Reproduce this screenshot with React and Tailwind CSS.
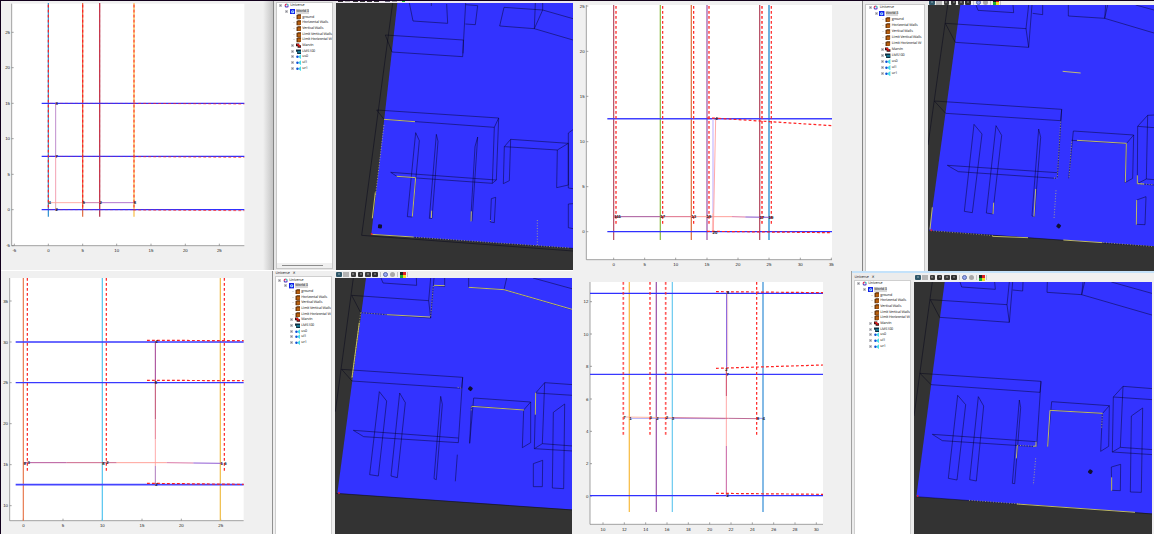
import React from "react";

const RED = "#ff2222";
const DARK = "#333333";

/* ---------- plots ---------- */

function Plot({ view, className, frame, xt, yt, solid = [], dashed = [], thin = [], marks = [] }) {
  const [l, t, r, b] = frame;
  return (
    <svg viewBox={view} className={className} preserveAspectRatio="none" textRendering="geometricPrecision">
      <rect x={l} y={t} width={r - l} height={b - t} fill="#fff" />
      <path d={`M${l} ${t}V${b}H${r}`} fill="none" stroke="#777" strokeWidth="2" />
      {xt.map(([x, s]) => (
        <g key={"x" + s}>
          <path d={`M${x} ${b}v-6`} stroke="#777" strokeWidth="2" />
          <text x={x} y={b + 19} fontSize="13" textAnchor="middle" fill="#222" fontFamily="Liberation Sans, sans-serif">{s}</text>
        </g>
      ))}
      {yt.map(([y, s]) => (
        <g key={"y" + s}>
          <path d={`M${l} ${y}h6`} stroke="#777" strokeWidth="2" />
          <text x={l - 5} y={y + 5} fontSize="13" textAnchor="end" fill="#222" fontFamily="Liberation Sans, sans-serif">{s}</text>
        </g>
      ))}
      {solid.map(([x1, y1, x2, y2, c, w = 3.6], i) => (
        <line key={"s" + i} x1={x1} y1={y1} x2={x2} y2={y2} stroke={c} strokeWidth={w} />
      ))}
      {thin.map(([x1, y1, x2, y2, c, w = 2.4], i) => (
        <line key={"t" + i} x1={x1} y1={y1} x2={x2} y2={y2} stroke={c} strokeWidth={w} />
      ))}
      {dashed.map(([x1, y1, x2, y2, w = 3.6, o = 1], i) => (
        <line key={"d" + i} x1={x1} y1={y1} x2={x2} y2={y2} stroke={RED} strokeWidth={w} strokeOpacity={o} strokeDasharray="8.5 6.5" />
      ))}
      {marks.map(([x, y, s], i) => (
        <text key={"m" + i} x={x} y={y + 4.7} fontSize="13" fontWeight="700" textAnchor="middle" fill="#1a1a1a" fontFamily="Liberation Sans, sans-serif">{s}</text>
      ))}
    </svg>
  );
}

const BLUE = "#3030ff";

function PlotOne() {
  return (
    <Plot
      view="3 3 816 807"
      className="block h-[269px] w-[272px]"
      frame={[35, 11, 733, 737]}
      xt={[[43, "-5"], [145, "0"], [248, "5"], [350, "10"], [453, "15"], [556, "20"], [658, "25"]]}
      yt={[[97, "25"], [203, "20"], [310, "15"], [416, "10"], [523, "5"], [629, "0"], [737, "-5"]]}
      solid={[
        [145, 9, 145, 650, "#2a8fd0"], [248, 9, 248, 650, "#e0683a", 3.5], [299, 9, 299, 650, "#b8405a", 4], [402, 9, 402, 650, "#fbd07a", 5],
        [125, 310, 733, 310, BLUE, 4], [125, 469, 733, 469, BLUE, 4], [125, 629, 733, 629, BLUE, 4],
      ]}
      dashed={[
        [145, 14, 145, 630], [248, 14, 248, 630], [299, 14, 299, 630, 2, 0.6], [402, 14, 402, 630, 3],
        [150, 309.5, 400, 310, 1.4, 0.6], [400, 310, 733, 312, 2.6, 0.85], [150, 469, 400, 470, 1.4, 0.6], [400, 470, 733, 472, 2.6, 0.85],
        [150, 629, 400, 630, 1.4, 0.6], [400, 630, 733, 632, 2.6, 0.85],
      ]}
      thin={[
        [167, 310, 167, 469, "#b070c0"], [167, 469, 167, 608, "#f08aa0"], [167, 608, 167, 629, "#d090a0"],
        [149, 608, 248, 608, "#ff9a90"], [248, 608, 302, 608, "#c05898"], [302, 608, 405, 608, "#a050c0"],
      ]}
      marks={[[170, 310, "3"], [170, 470, "7"], [170, 629, "2"], [149, 608, "4"], [251, 608, "5"], [302, 608, "2"], [405, 608, "8"]]}
    />
  );
}

function PlotTwo() {
  return (
    <Plot
      view="3 3 867 810"
      className="block h-[270px] w-[289px]"
      frame={[43, 15, 780, 779]}
      xt={[[125, "0"], [218, "5"], [311, "10"], [405, "15"], [498, "20"], [591, "25"], [685, "30"], [778, "35"]]}
      yt={[[18, "25"], [154, "20"], [289, "15"], [425, "10"], [560, "5"], [695, "0"]]}
      solid={[
        [125, 15, 125, 720, "#b44a60", 3.5], [265, 15, 265, 720, "#94c050", 4], [358, 15, 358, 720, "#e07a4c", 4],
        [405, 15, 405, 720, "#a564b0", 4], [563, 15, 563, 720, "#b8556a", 4], [591, 15, 591, 720, "#60acdc", 5.5],
        [106, 356, 780, 356, "#4040ff", 4.5], [106, 695, 780, 695, BLUE, 4],
      ]}
      dashed={[
        [132, 18, 132, 677, 5, 0.75], [272, 18, 272, 677], [365, 18, 365, 677], [411, 18, 411, 677, 5, 0.75],
        [570, 18, 570, 677, 6, 0.7], [598, 18, 598, 677, 4, 0.9],
        [405, 354, 440, 355], [440, 355, 780, 377], [405, 694, 780, 698],
      ]}
      thin={[
        [423, 358, 423, 640, "#d6ccff", 5], [423, 640, 422, 694, "#ffc0c0", 5], [431, 358, 424, 694, "#ffaaa8", 3],
        [127, 650, 265, 650, "#a04890", 2.8], [265, 650, 358, 650, "#dc607c", 2.8], [358, 650, 480, 650, "#ff9890", 2.8],
        [480, 650, 520, 651, "#dc709c", 2.8], [520, 651, 600, 652, "#8450c8", 3],
      ]}
      marks={[[130, 650, "1"], [140, 650, "11"], [272, 650, "17"], [365, 650, "13"], [411, 650, "15"], [569, 651, "17"], [597, 653, "19"], [433, 356, "4"], [429, 696, "20"]]}
    />
  );
}

function PlotThree() {
  return (
    <Plot
      view="3 15 813 789"
      className="block h-[263px] w-[271px]"
      frame={[29, 36, 731, 764]}
      xt={[[70, "0"], [189, "5"], [307, "10"], [426, "15"], [544, "20"], [662, "25"]]}
      yt={[[105, "35"], [228, "30"], [350, "25"], [473, "20"], [596, "15"], [719, "10"]]}
      solid={[
        [70, 36, 70, 764, "#e87a50"], [307, 36, 307, 764, "#5cc8f0", 3.8], [661, 36, 661, 764, "#f0c050", 3.8],
        [47, 228, 731, 228, "#3838ff", 4], [47, 350, 731, 350, "#3838ff", 4], [47, 656, 731, 656, "#4444ff", 4.8],
      ]}
      dashed={[
        [82, 36, 82, 615], [319, 36, 319, 615], [673, 36, 673, 615],
        [441, 223, 731, 224], [441, 343, 731, 344], [441, 652, 731, 655],
      ]}
      thin={[
        [466, 228, 466, 350, "#a03a90", 3], [466, 350, 466, 460, "#c0486c", 3], [466, 460, 466, 520, "#e87c90", 3],
        [466, 520, 466, 600, "#ff9a9a", 2.5], [466, 600, 466, 656, "#a060b0", 2.5],
        [73, 590, 200, 590, "#b04890", 2.8], [200, 590, 350, 590, "#c85880", 2.8], [350, 590, 500, 590, "#ff9a90", 2.8],
        [500, 590, 580, 591, "#d870a0", 2.8], [580, 591, 668, 592, "#8850d0", 2.8],
      ]}
      marks={[[74, 591, "9"], [86, 590, "3"], [310, 591, "8"], [322, 590, "2"], [665, 591, "1"], [676, 593, "6"], [469, 226, "4"], [468, 350, "8"], [469, 655, "2"]]}
    />
  );
}

function PlotFour() {
  return (
    <Plot
      view="3 15 834 789"
      className="block h-[263px] w-[278px]"
      frame={[54, 48, 753, 775]}
      xt={[[93, "10"], [157, "12"], [221, "14"], [285, "16"], [349, "18"], [413, "20"], [477, "22"], [541, "24"], [605, "26"], [669, "28"], [733, "30"]]}
      yt={[[107, "12"], [204, "10"], [301, "8"], [399, "6"], [496, "4"], [593, "2"], [690, "0"]]}
      solid={[
        [172, 48, 172, 738, "#f8c050", 4], [253, 48, 253, 738, "#a060b0", 4], [301, 48, 301, 738, "#70ccf0", 3.8], [573, 48, 573, 738, "#78b4e4", 5.5],
        [54, 82, 753, 82, BLUE, 4], [54, 325, 753, 325, "#3838ff", 4], [54, 689, 753, 689, BLUE, 4],
      ]}
      dashed={[
        [154, 48, 154, 507, 5, 0.75], [234, 48, 234, 507, 5, 0.75], [281, 48, 281, 507, 5, 0.75], [554, 48, 554, 507],
        [432, 77, 753, 80], [432, 307, 753, 297], [432, 682, 753, 685],
      ]}
      thin={[
        [464, 82, 464, 307, "#7850d8", 3], [467, 82, 467, 300, "#f8b0b0", 1.5], [463, 307, 463, 390, "#d04060", 3],
        [463, 390, 463, 540, "#ff9898", 2.5], [463, 540, 463, 689, "#c860a0", 3],
        [175, 457, 460, 458, "#8a80f0", 2], [157, 453, 300, 455, "#ffaa90", 2.5], [300, 455, 470, 457, "#c85078", 2.5],
        [470, 457, 556, 458, "#b04c80", 2.5], [556, 457, 576, 457, "#6060f0", 2],
      ]}
      marks={[[157, 455, "7"], [175, 457, "1"], [236, 455, "3"], [256, 457, "2"], [285, 454, "2"], [303, 457, "3"], [558, 457, "8"], [575, 457, "4"], [468, 80, "8"], [463, 309, "2"], [467, 325, "7"], [467, 688, "2"]]}
    />
  );
}

/* ---------- simulator scenes ---------- */

function Scene({ view, className, ground, lines, scans, dots = [], robot, origin }) {
  return (
    <svg viewBox={view} className={className} preserveAspectRatio="none">
      <rect x="0" y="0" width="1000" height="900" fill={DARK} />
      <polygon points={ground} fill="#3333ff" />
      <path d={lines} fill="none" stroke="#000018" strokeWidth="2" strokeOpacity=".68" />
      <path d={scans} fill="none" stroke="#cfc964" strokeWidth="2.7" />
      {dots.map((d, i) => (
        <path key={i} d={d} fill="none" stroke="#c4bf70" strokeWidth="2.2" strokeDasharray="3 5" />
      ))}
      {origin && <circle cx={origin[0]} cy={origin[1]} r="3" fill="#e02030" />}
      <rect x={robot[0] - 6} y={robot[1] - 6} width="12" height="12" rx="3" fill="#101030" transform={`rotate(${robot[2]} ${robot[0]} ${robot[1]})`} />
    </svg>
  );
}

function SceneOne() {
  return (
    <Scene
      view="198 9 711 801"
      className="block h-[267px] w-[237px]"
      ground="382,9 909,9 909,745 304,703"
      lines="M368 9L275 706L909 753M304 703L909 745M346 105L580 120M346 105L366 156L578 170L587 9M579 160L580 120M418 9L429 63L533 70L530 12M484 9V18M587 14L623 17L616 74L586 72M689 78L702 22L818 30L793 86L689 78M796 9L793 86M818 9V30L909 56M793 86L909 120M320 330L686 354L673 382L342 358L320 330M686 354L679 540L667 550L673 382M362 517L679 540M362 517L382 530L667 550M437 398L448 422L427 651L412 650L437 398M499 403L504 424L486 655L478 655L499 403M623 411L615 440L602 663M623 411L606 664M703 440L722 418L895 430L862 450L703 440L700 551L718 542L722 418M895 430V555L860 563L862 450M909 389L895 399V564L909 566M909 611L895 612V683L909 686M664 596L677 592L673 668L661 666Z"
      scans="M342 358L435 365M380 529L437 533L427 650M316 577L307 655M304 703L430 711M485 632L484 654M604 634L603 664"
      dots={["M342 375L316 590", "M430 711L900 744", "M802 660V738", "M661 660V668"]}
      robot={[330, 679, 5]}
      origin={[305, 702]}
    />
  );
}

function SceneTwo() {
  return (
    <Scene
      view="222 15 678 798"
      className="block h-[266px] w-[226px]"
      ground="319,15 900,15 900,739 226,692"
      lines="M281 15L222 435M226 692L900 740M274 70L517 86M274 70L304 127L524 142L534 15M524 15L516 86L524 142M366 15L372 31L479 38L477 15M536 40L566 44V15M643 15V48L752 55L761 15M755 15L752 55L900 99M845 15L900 30M241 303L623 328L620 362L275 340L241 303M623 328L610 533M280 496L610 518M280 496L313 515L606 535M360 373L384 402L355 638L331 634L360 373M426 377L443 406L416 642L397 639L426 377M554 387L560 412L541 650L534 648L554 387M644 535L658 393L839 405L817 431L653 421M839 405L836 535L813 548L817 431M900 345L881 346L851 379L850 551L900 555M881 346L877 537L850 551M851 379L900 383M877 537L900 539M848 600L876 590L873 674L847 673Z"
      scans="M669 421L817 430L814 547M626 214L680 219M419 608L417 642M545 567L540 650M848 600L847 674M850 526V551L870 552M628 720L745 728M415 709L522 713M235 622L228 688"
      dots={["M230 692L420 707", "M740 727L900 740", "M606 571L600 657", "M653 425L645 535", "M620 365L610 533", "M852 551L900 554", "M600 534L610 534"]}
      robot={[614, 678, 35]}
      origin={[232, 691]}
    />
  );
}

function SceneThree() {
  return (
    <Scene
      view="195 36 711 768"
      className="block h-[256px] w-[237px]"
      ground="288,36 909,36 909,731 202,682"
      lines="M250 36L196 437M198 682L909 732M245 88L476 104M245 88L272 140L482 156L492 36M482 36L476 104L482 156M333 36L339 51L440 58L439 36M524 36V62L492 58M596 36V64L702 71L909 132M710 36L702 71M789 36L909 69M215 310L578 334L575 367L246 345L215 310M578 334L565 530M250 493L565 516M250 493L281 512L565 530M328 377L350 405L325 630L299 626L328 377M389 381L406 410L382 635L363 630L389 381M512 391L517 415L499 641L492 638L512 391M562 566L556 646M599 532L611 396L782 408L761 432L604 420M604 420L599 532M782 408L782 530L757 545L761 432M909 356L824 350L797 381L793 548L909 555M824 350L817 533L793 548M797 381L909 388M817 533L909 540M790 593L818 583L817 662L790 662ZM850 439L884 414L881 668L847 666Z"
      scans="M605 421L762 432M797 380L796 446M596 64L702 71L906 130M492 58L524 59M268 170L246 335M350 146L480 153"
      dots={["M272 140L350 146", "M490 60L482 152", "M604 422V436", "M563 364L575 367", "M272 140L246 340"]}
      robot={[601, 368, 40]}
      origin={[207, 681]}
    />
  );
}

function SceneFour() {
  return (
    <Scene
      view="192 48 714 756"
      className="block h-[252px] w-[238px]"
      ground="284,48 909,48 909,743 199,692"
      lines="M247 48L192 450M199 692L909 744M241 101L471 116M241 101L269 154L478 169L488 48M478 48L471 116L478 169M330 48L335 63L436 70L434 48M519 48L518 75L488 72M592 48L591 79L695 86L704 48M699 48L695 86L909 148M784 48L909 83M210 322L573 346L570 379L243 356L210 322M573 346L560 542M247 505L560 527M247 505L277 524L556 542M323 388L347 416L321 642L295 637L323 388M385 392L401 420L379 645L359 641L385 392M508 402L512 425L494 653L487 652L508 402M593 542L605 407L778 419L757 443L600 432M778 419L776 541L752 556L757 443M909 368L819 361L790 393L787 558L909 566M819 361L811 544L787 558M790 393L909 401M811 544L909 551M784 603L812 595L811 674L785 673ZM844 450L878 426L874 679L841 678Z"
      scans="M600 433L757 442M600 433L593 542M502 538L499 577M500 714L855 739M785 634V674M558 527V540L550 541"
      dots={["M757 442L755 485", "M502 538L560 541", "M357 703L510 714", "M557 577L550 657"]}
      robot={[721, 617, 35]}
      origin={[203, 690]}
    />
  );
}

/* ---------- tree ---------- */

function NodeIcon({ kind }) {
  const c = "block h-[5.4px] w-[5.4px] shrink-0";
  if (kind === "universe")
    return (
      <svg viewBox="0 0 10 10" className={c}>
        <path d="M5 5V1A4 4 0 0 1 9 5Z" fill="#40c0c0" />
        <path d="M5 5H9A4 4 0 0 1 5 9Z" fill="#8048d0" />
        <path d="M5 5V9A4 4 0 0 1 1 5Z" fill="#5050c0" />
        <path d="M5 5H1A4 4 0 0 1 5 1Z" fill="#e03060" />
        <circle cx="5" cy="5" r="1.2" fill="#fff" />
      </svg>
    );
  if (kind === "world")
    return (
      <svg viewBox="0 0 10 10" className={c}>
        <rect width="10" height="10" fill="#1020e8" />
        <circle cx="5" cy="5" r="2.9" fill="#b8e8ff" />
        <circle cx="5" cy="5" r="1.3" fill="#3070f0" />
      </svg>
    );
  if (kind === "wall")
    return (
      <svg viewBox="0 0 10 10" className={c}>
        <path d="M1 2L4 .5H9.5V8L7 9.8H1Z" fill="#5a2c08" />
        <path d="M3 3H9V8L7 9H3Z" fill="#b8600f" />
      </svg>
    );
  if (kind === "robot")
    return (
      <svg viewBox="0 0 10 10" className={c}>
        <path d="M0 1H6V4H10V9H3V6H0Z" fill="#301010" />
        <path d="M1 2H5L9 7H5Z" fill="#e01818" />
      </svg>
    );
  if (kind === "laser")
    return (
      <svg viewBox="0 0 10 10" className={c}>
        <path d="M0 1H10V9.5H2V5H0Z" fill="#103040" />
        <path d="M3 4H9V7H3Z" fill="#1888a8" />
      </svg>
    );
  return (
    <svg viewBox="0 0 10 10" className={c}>
      <path d="M3.5 5L10 0V10Z" fill="#48dce8" />
      <circle cx="2.6" cy="5" r="2.2" fill="#1050d8" />
    </svg>
  );
}

const NODES = [
  [0, "universe", "Universe", true],
  [1, "world", "World 3", true],
  [2, "wall", "ground", false],
  [2, "wall", "Horizontal Walls", false],
  [2, "wall", "Vertical Walls", false],
  [2, "wall", "Limit Vertical Walls", false],
  [2, "wall", "Limit Horizontal W", false],
  [2, "robot", "Marvin", true],
  [2, "laser", "LMS100", true],
  [2, "sonar", "us0", true],
  [2, "sonar", "ul1", true],
  [2, "sonar", "ur1", true],
];

const INDENT = ["pl-[2px]", "pl-[8px]", "pl-[14px]"];

function Tree({ row }) {
  return (
    <div>
      {NODES.map(([level, kind, label, open]) => (
        <div key={label} className={`flex items-center whitespace-nowrap ${row} ${INDENT[level]}`}>
          <span className="flex w-[4px] shrink-0 items-center justify-center">
            {open ? (
              <span className="flex h-[3px] w-[3px] items-center justify-center bg-[#c4c4c8]">
                <span className="h-px w-px bg-[#85858d]" />
              </span>
            ) : (
              <span className="ml-[2px] h-px w-[3px] bg-[#e0e0e0]" />
            )}
          </span>
          <span className="ml-[1.4px] mr-px">
            <NodeIcon kind={kind} />
          </span>
          <span className={`font-['Open_Sans',sans-serif] text-[3.7px] leading-[5px] tracking-[-0.13px] text-[#111] [text-rendering:geometricPrecision] ${level === 1 ? "bg-[#d9d9d9]" : ""}`}>{label}</span>
        </div>
      ))}
    </div>
  );
}

function Tab() {
  return (
    <div className="flex items-center gap-[3px] pl-px font-['Open_Sans',sans-serif] text-[3.7px] leading-[5px] tracking-[-0.13px] text-[#111] [text-rendering:geometricPrecision]">
      <span>Universe</span>
      <span>✕</span>
    </div>
  );
}

function Tool({ color }) {
  return (
    <span className={`flex h-[5.4px] w-[5.6px] shrink-0 items-center justify-center rounded-[1px] ${color}`}>
      <span className="h-[2px] w-[2px] bg-white/25" />
    </span>
  );
}

function Toolbar({ className }) {
  return (
    <div className={`flex items-center gap-[1.7px] overflow-hidden bg-[#f0f0f0] pl-px ${className}`}>
      <Tool color="bg-[#30586a]" />
      <span className="h-[5px] w-[5.6px] shrink-0 bg-[#b4b4b4]" />
      <Tool color="bg-[#3c3c3c]" />
      <Tool color="bg-[#303030]" />
      <Tool color="bg-[#3c3c3c]" />
      <Tool color="bg-[#303030]" />
      <span className="ml-[0.7px] h-[5px] w-px shrink-0 bg-[#c4c4c4]" />
      <span className="h-[5px] w-[5px] shrink-0 rounded-full border border-[#5868a8] bg-[#98a8f0]" />
      <span className="ml-[0.6px] h-[5px] w-[5px] shrink-0 rounded-full bg-[#a8a8a8]" />
      <span className="h-[5px] w-px shrink-0 bg-[#c4c4c4]" />
      <svg viewBox="0 0 6 6" className="block h-[6px] w-[6px] shrink-0">
        <path d="M0 0H3V3H0Z" fill="#202020" />
        <path d="M3 0H6V3H3Z" fill="#e02020" />
        <path d="M0 3H3V6H0Z" fill="#20b030" />
        <path d="M3 3H6V6H3Z" fill="#f8e020" />
      </svg>
      <span className="h-[5px] w-px shrink-0 bg-[#c4c4c4]" />
    </div>
  );
}

function PlotPane({ children }) {
  return <div className="relative shrink-0 overflow-hidden bg-[#f0f0f0]">{children}</div>;
}

export default function App() {
  return (
    <div className="flex h-[534px] w-[1154px] overflow-hidden border-t border-[#12001c] bg-[#f0f0f0]">
      <div className="flex w-[573px] shrink-0 flex-col border-l border-[#12001c]">
        <section className="flex h-[269px]">
          <PlotPane>
            <PlotOne />
            <div className="absolute inset-y-0 right-0 w-[10px] bg-gradient-to-r from-transparent to-[#c4c4c4]" />
          </PlotPane>
          <div className="flex w-[63px] shrink-0 border-l border-[#858585] bg-[#e6e6e6] pb-[1px] pl-[1.5px] pr-[3px] pt-px">
            <div className="flex min-w-0 flex-1 flex-col justify-between border border-[#c8c8c8] bg-white">
              <Tree row="h-[5.68px]" />
              <div className="flex h-[5px] items-center bg-[#f0f0f0] pl-[5px]">
                <div className="h-px w-[41px] bg-[#8c8c8c]" />
              </div>
            </div>
          </div>
          <div className="flex w-[237px] shrink-0 flex-col">
            <div className="flex h-[2px] items-start gap-[2.3px] bg-[#eee8f0] pl-[2px]">
              <span className="h-px w-[5px] bg-[#333]" />
              <span className="h-px w-[5px] bg-[#aaa]" />
              <span className="h-px w-[5px] bg-[#333]" />
              <span className="h-px w-[5px] bg-[#333]" />
              <span className="h-px w-[5px] bg-[#333]" />
              <span className="h-px w-[5px] bg-[#333]" />
              <span className="ml-[3px] h-px w-[5px] bg-[#667]" />
              <span className="h-px w-[5px] bg-[#999]" />
              <span className="ml-[3px] h-px w-[3px] bg-[#20c030]" />
            </div>
            <SceneOne />
          </div>
        </section>
        <section className="flex h-[264px] border-t border-white">
          <PlotPane>
            <PlotThree />
          </PlotPane>
          <div className="flex w-[63px] shrink-0 flex-col border-l border-[#909090] bg-[#efefef] pl-[1.5px] pr-[3px]">
            <Tab />
            <div className="min-h-0 flex-1 overflow-hidden border border-b-0 border-[#cfcfcf] bg-white pt-[0.4px]">
              <Tree row="h-[5.68px]" />
            </div>
          </div>
          <div className="w-[237px] shrink-0">
            <Toolbar className="h-[7px]" />
            <SceneThree />
          </div>
        </section>
      </div>
      <div className="flex w-[581px] shrink-0 flex-col">
        <section className="flex h-[270px]">
          <PlotPane>
            <PlotTwo />
          </PlotPane>
          <div className="flex w-[66px] shrink-0 border-l border-[#858585] bg-[#e9e9e9] pl-[2px] pr-[3px] pt-[2.5px]">
            <div className="min-w-0 flex-1 overflow-hidden border border-b-0 border-[#c8c8c8] bg-white">
              <Tree row="h-[6px]" />
            </div>
          </div>
          <div className="flex w-[226px] shrink-0 flex-col">
            <div className="flex h-[4px] flex-col justify-end overflow-hidden">
              <Toolbar className="h-[6px] shrink-0" />
            </div>
            <SceneTwo />
          </div>
        </section>
        <section className="flex h-[263px]">
          <PlotPane>
            <PlotFour />
          </PlotPane>
          <div className="flex min-w-0 flex-1 flex-col border-l border-[#a0a0a0]">
            <div className="h-[2px] shrink-0 bg-[#c4e2fa]" />
            <div className="flex min-h-0 flex-1">
              <div className="flex w-[62px] shrink-0 flex-col bg-[#ececec] pl-[1.5px] pr-[3px] pt-[2px]">
                <Tab />
                <div className="min-h-0 flex-1 overflow-hidden border border-b-0 border-[#cfcfcf] bg-white">
                  <Tree row="h-[5.68px]" />
                </div>
              </div>
              <div className="w-[238px] shrink-0">
                <Toolbar className="h-[9px]" />
                <SceneFour />
              </div>
            </div>
          </div>
        </section>
      </div>
    </div>
  );
}
